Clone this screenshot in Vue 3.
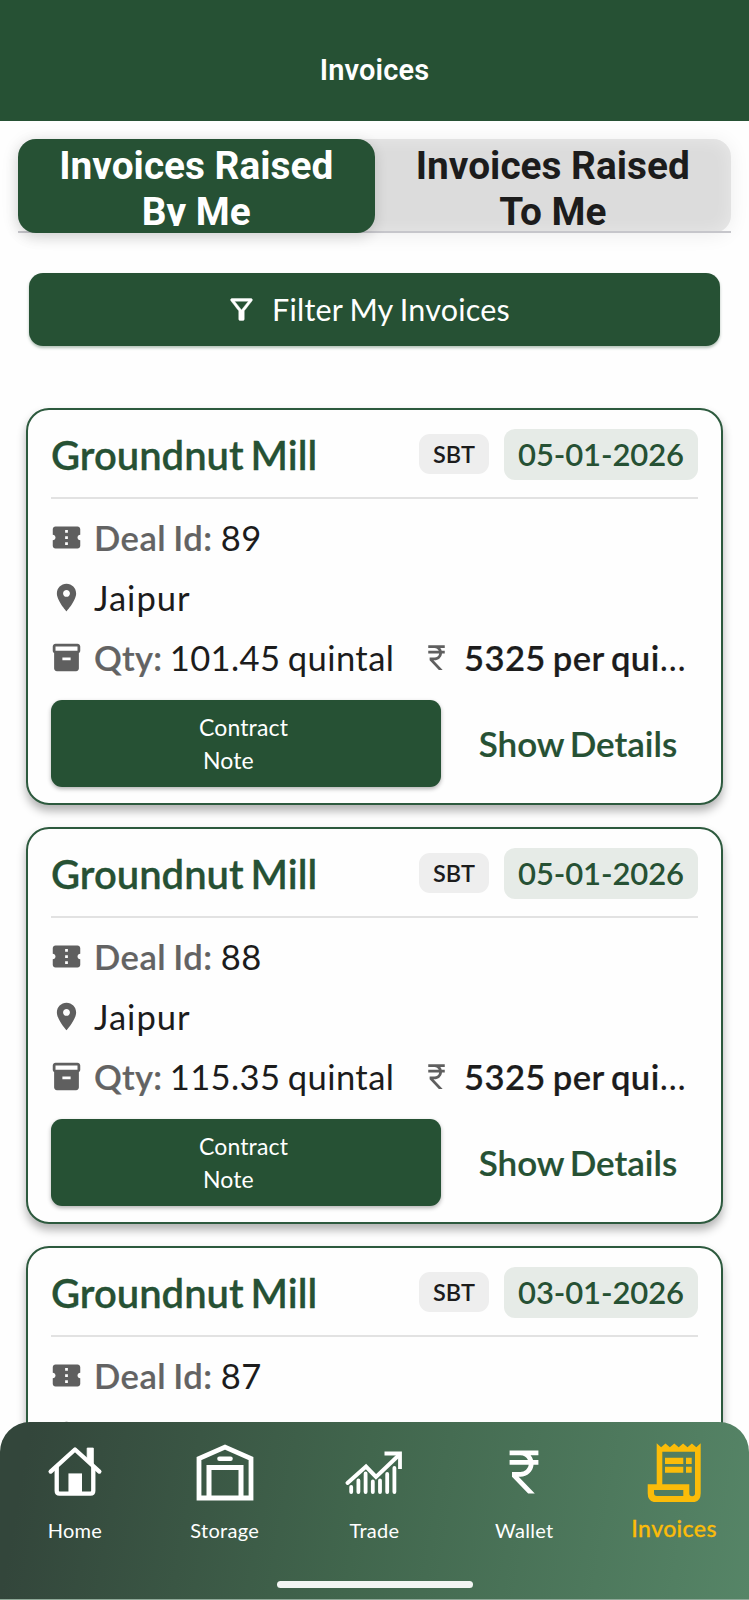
<template>
  <div class="screen">
    <header class="app-bar">
      <h1 class="app-title">Invoices</h1>
    </header>

    <main class="content">
      <div class="tabs">
        <button
          v-for="tab in tabs"
          :key="tab.id"
          class="tab"
          :class="{ active: tab.id === activeTab }"
          @click="activeTab = tab.id"
        >
          <span class="tab-label">{{ tab.label }}</span>
        </button>
      </div>

      <button class="filter-btn">
        <svg class="icon" viewBox="0 0 24 24">
          <path d="M7 6h10l-5.010 6.300L7 6zm-2.750-.39C6.270 8.200 10 13 10 13v6c0 .55.45 1 1 1h2c.55 0 1-.45 1-1v-6s3.720-4.800 5.740-7.390c.51-.66.04-1.610-.79-1.610H5.040c-.83 0-1.300.95-.79 1.610z" stroke="currentColor" stroke-width=".3" />
        </svg>
        <span class="filter-text">Filter My Invoices</span>
      </button>

      <section class="invoice-list">
        <article v-for="invoice in invoices" :key="invoice.dealId" class="card">
          <div class="card-header">
            <h2 class="mill">{{ invoice.name }}</h2>
            <span class="tag">{{ invoice.tag }}</span>
            <span class="date">{{ invoice.date }}</span>
          </div>

          <div class="row">
            <svg class="icon" viewBox="0 0 24 24">
              <path d="M22 10V6c0-1.11-.9-2-2-2H4c-1.1 0-1.99.89-1.99 2v4c1.1 0 1.99.9 1.99 2s-.89 2-2 2v4c0 1.1.9 2 2 2h16c1.1 0 2-.9 2-2v-4c-1.1 0-2-.9-2-2s.9-2 2-2zm-9 7.5h-2v-2h2v2zm0-4.5h-2v-2h2v2zm0-4.5h-2v-2h2v2z" />
            </svg>
            <span class="text"><b class="key deal">Deal Id:</b> {{ invoice.dealId }}</span>
          </div>

          <div class="row">
            <svg class="icon" viewBox="0 0 24 24">
              <path d="M12 2C8.13 2 5 5.13 5 9c0 5.25 7 13 7 13s7-7.75 7-13c0-3.87-3.13-7-7-7zm0 9.5c-1.38 0-2.5-1.12-2.5-2.5s1.12-2.5 2.5-2.5 2.5 1.12 2.5 2.5-1.12 2.5-2.5 2.5z" />
            </svg>
            <span class="text city">{{ invoice.city }}</span>
          </div>

          <div class="row">
            <svg class="icon" viewBox="0 0 24 24">
              <path d="M20 2H4c-1 0-2 .9-2 2v3.01c0 .72.43 1.34 1 1.69V20c0 1.1 1.1 2 2 2h14c.9 0 2-.9 2-2V8.7c.57-.35 1-.97 1-1.69V4c0-1.1-1-2-2-2zm-5 12H9v-2h6v2zm5-7H4V4l16-.02V7z" />
            </svg>
            <span class="text qty"><b class="key">Qty:</b> {{ invoice.qty }}</span>
            <svg class="icon rupee" viewBox="0 0 24 24">
              <path :d="rupeePath" />
            </svg>
            <span class="text price"><b>{{ invoice.price }}</b>…</span>
          </div>

          <div class="actions">
            <button class="contract-btn">
              <span class="contract-text">Contract<br /><span class="note">Note</span></span>
            </button>
            <button class="details-btn">Show Details</button>
          </div>
        </article>
      </section>
    </main>

    <nav class="bottom-nav">
      <div class="nav-items">
        <a class="nav-item">
          <svg class="nav-icon" viewBox="-2 -2.5 64 64" fill="none" stroke="currentColor">
            <path d="M4 29 30 5.5 56 29" stroke-width="4.6" stroke-linecap="round" stroke-linejoin="round" />
            <path d="M10.5 24v25.500q0 3 3 3h33q3 0 3-3V24" stroke-width="4.6" />
            <path d="M43 4h6.5v20L43 18z" fill="currentColor" stroke="currentColor" stroke-linejoin="round" />
            <path d="M23 31h14.5v21H23z" fill="currentColor" stroke="none" />
          </svg>
          <span class="nav-label">Home</span>
        </a>
        <a class="nav-item">
          <svg class="nav-icon" viewBox="0 0 60 60" fill="none" stroke="currentColor">
            <path d="M4 56V16.5L30 5l26 11.5V56z" stroke-width="4.8" />
            <path d="M14 56V25.5h32V56" stroke-width="5" />
            <path d="M24.5 16.8h11" stroke-width="4.6" stroke-linecap="round" />
          </svg>
          <span class="nav-label">Storage</span>
        </a>
        <a class="nav-item">
          <svg class="nav-icon" viewBox="0 0 60 60" fill="none" stroke="currentColor">
            <path d="M3.5 41 22 24.5 32 35 54.5 13.5" stroke-width="4" stroke-linecap="round" />
            <path d="M40.5 11.500h15.500V27" stroke-width="3.8" />
            <path d="M7.2 45v5M14.4 38.5v11.5M21.6 31.5v18.5M28.8 39.5v10.5M36 38.5v11.5M43.2 32v18M50.4 26v24" stroke-width="3.8" stroke-linecap="round" />
          </svg>
          <span class="nav-label">Trade</span>
        </a>
        <a class="nav-item">
          <svg class="nav-icon" viewBox="-.5 -.5 25 25" fill="currentColor">
            <path :d="rupeePath" />
          </svg>
          <span class="nav-label">Wallet</span>
        </a>
        <a class="nav-item active">
          <svg class="nav-icon" viewBox="0 0 60 60" fill="currentColor">
            <path
              fill-rule="evenodd"
              d="M12.7 1.3 17.1 5.3 21.5 1.5 25.9 5.3 30.3 1.5 34.7 5.3 39.1 1.5 43.5 5.3 47.9 1.5 52.3 5.3 56.7 1.3V51.3q0 9-9 9H12.7q-9 0-9-9V42.3h9zM18.3 9.7V42.3H45.3V51.5q0 2.8 2.8 2.8t2.9-2.8V9.7zM10 48V51q0 3 3 3H39.3V48z"
            />
            <path d="M21 15.7h18.3V22H21zM42 15.7h5.7V22H42zM21 24.7h18.3v6H21zM42 24.7h5.7v6H42z" />
          </svg>
          <span class="nav-label">Invoices</span>
        </a>
      </div>
      <div class="home-indicator"></div>
    </nav>
  </div>
</template>

<script setup>
import { ref } from 'vue';

const activeTab = ref('by-me');

const tabs = [
  { id: 'by-me', label: 'Invoices Raised By Me' },
  { id: 'to-me', label: 'Invoices Raised To Me' }
];

const invoices = [
  { name: 'Groundnut Mill', tag: 'SBT', date: '05-01-2026', dealId: 89, city: 'Jaipur', qty: '101.45 quintal', price: '5325 per qui' },
  { name: 'Groundnut Mill', tag: 'SBT', date: '05-01-2026', dealId: 88, city: 'Jaipur', qty: '115.35 quintal', price: '5325 per qui' },
  { name: 'Groundnut Mill', tag: 'SBT', date: '03-01-2026', dealId: 87, city: 'Jaipur', qty: '101.45 quintal', price: '5325 per qui' }
];

const rupeePath = 'M13.66 7C13.1 5.82 11.9 5 10.5 5H6V3h12v2h-3.26c.48.58.84 1.26 1.05 2H18v2h-2.02c-.25 2.8-2.61 5-5.48 5h-.73l6.73 7h-2.77L7 14v-2h3.5c1.76 0 3.22-1.3 3.46-3H6V7z';
</script>

<style>
body {
  margin: 0;
  background: #fff;
}
</style>

<style scoped>
.screen {
  width: 749px;
  height: 1600px;
  display: flex;
  flex-direction: column;
  overflow: hidden;
  background: #fefefe;
  color: #1c1c1c;
  font-family: Lato, 'Liberation Sans', sans-serif;
}

button {
  border: 0;
  padding: 0;
  background: none;
  font: inherit;
  color: inherit;
}

h1,
h2 {
  margin: 0;
}

.icon {
  width: 33px;
  height: 33px;
  flex: none;
  fill: currentColor;
}

/* top bar */
.app-bar {
  flex: none;
  height: 121px;
  box-sizing: border-box;
  padding-top: 52px;
  background: #265134;
  text-align: center;
}

.app-title {
  font: 600 29px/36px Roboto, sans-serif;
  letter-spacing: 0.15px;
  color: #fff;
}

.content {
  flex: 1;
  min-height: 0;
  overflow: hidden;
}

/* tabs */
.tabs {
  position: relative;
  display: flex;
  height: 94px;
  margin: 18px 18px 0;
  border-radius: 18px;
  background: #dcdcdc;
  box-shadow: inset 0 0 18px rgba(255, 255, 255, 0.4), 0 2px 20px rgba(0, 0, 0, 0.07);
}

/* hairline under both tabs, square at the ends */
.tabs::before {
  content: '';
  position: absolute;
  left: 0;
  right: 0;
  bottom: 0;
  height: 2px;
  background: #c6c6cb;
}

.tab {
  flex: 1;
  position: relative;
  height: 94px;
  padding: 4px 30px 0;
  border-radius: 18px;
  font: 700 38.8px/46px Roboto, sans-serif;
  display: flex;
  align-items: flex-start;
  justify-content: center;
}

.tab.active {
  background: #265134;
  color: #fff;
  box-shadow: 0 4px 14px rgba(0, 0, 0, 0.14);
}

.tab-label {
  height: 83px;
  overflow: hidden;
}

/* filter */
.filter-btn {
  display: flex;
  align-items: center;
  justify-content: center;
  gap: 14px;
  width: 691px;
  height: 73px;
  padding-right: 14px;
  box-sizing: border-box;
  margin: 40px 0 0 29px;
  border-radius: 14px;
  background: #265134;
  color: #fff;
  box-shadow: 0 2px 3px rgba(38, 81, 52, 0.35);
}

.filter-text {
  margin-top: -2px;
  font-size: 30.5px;
  letter-spacing: 0.2px;
  word-spacing: -1px;
}

/* invoice cards */
.invoice-list {
  display: flex;
  flex-direction: column;
  gap: 22px;
  padding: 62px 26px 0 26px;
}

.card {
  flex: none;
  height: 397px;
  box-sizing: border-box;
  padding: 19px 23px 0 23px;
  border: 2px solid #2d5a3e;
  border-radius: 23px;
  background: #fefefe;
  box-shadow: 0 6px 10px rgba(0, 0, 0, 0.3);
}

.card-header {
  display: flex;
  align-items: center;
  height: 52px;
  padding-bottom: 16px;
  margin-bottom: 9px;
  border-bottom: 2px solid #e2e2e2;
}

.mill {
  flex: 1;
  font-size: 40px;
  font-weight: 600;
  line-height: 52px;
  word-spacing: -3px;
  color: #265134;
  -webkit-text-stroke: 0.3px #265134;
}

.tag {
  width: 70px;
  height: 40px;
  margin: -3px 15px 0 0;
  border-radius: 11px;
  background: #eeeeee;
  font-size: 23.5px;
  font-weight: 600;
  line-height: 40px;
  text-align: center;
}

.date {
  width: 194px;
  height: 51px;
  margin-top: -1px;
  border-radius: 11px;
  background: #e6ebe7;
  color: #265134;
  font-size: 31px;
  font-weight: 600;
  line-height: 50px;
  letter-spacing: -0.1px;
  text-align: center;
}

.row {
  display: flex;
  align-items: center;
  height: 60px;
}

.row .icon {
  margin: -2px 11px 0 -1px;
  color: #5f5f5f;
}

.text {
  font-size: 34.6px;
  line-height: 44px;
  letter-spacing: 0.4px;
  word-spacing: -2px;
  white-space: nowrap;
}

.text b {
  font-weight: 600;
  -webkit-text-stroke: 0.2px currentColor;
}

.text .key {
  letter-spacing: 0.3px;
  color: #636363;
}

.text .deal {
  letter-spacing: 0.5px;
  margin-right: 1px;
}

.city {
  letter-spacing: 1px;
}

.qty {
  width: 327px;
}

.row .rupee {
  margin-right: 11px;
}

.actions {
  display: flex;
  align-items: center;
  margin-top: 12px;
}

.contract-btn {
  width: 390px;
  height: 87px;
  box-sizing: border-box;
  padding-right: 5px;
  border-radius: 11px;
  background: #265134;
  color: #fff;
  box-shadow: 0 2px 4px rgba(0, 0, 0, 0.3);
}

.contract-text {
  display: inline-block;
  font-size: 23px;
  line-height: 32.5px;
  letter-spacing: 0.15px;
  text-align: left;
}

.note {
  padding-left: 4px;
}

.details-btn {
  flex: 1;
  padding-left: 17px;
  margin-top: -1px;
  font-size: 35px;
  font-weight: 600;
  word-spacing: -3px;
  white-space: nowrap;
  color: #265134;
  -webkit-text-stroke: 0.2px #265134;
}

/* bottom navigation */
.bottom-nav {
  position: relative;
  z-index: 1;
  flex: none;
  height: 178px;
  box-sizing: border-box;
  margin-top: -178px;
  padding-top: 20px;
  border-radius: 30px 30px 0 0;
  border-bottom: 1px solid #8fa998;
  background: linear-gradient(100deg, #33463b 4%, #41664d 48%, #568567 100%);
  color: #fff;
}

.nav-items {
  display: flex;
}

.nav-item {
  flex: 1;
  display: flex;
  flex-direction: column;
  align-items: center;
}

.nav-icon {
  width: 60px;
  height: 60px;
}

.nav-label {
  margin-top: 14px;
  font-size: 20px;
  line-height: 28px;
  letter-spacing: 0.3px;
}

.nav-item.active {
  color: #fbbc09;
}

.nav-item.active .nav-label {
  margin-top: 12px;
  font-size: 23px;
  font-weight: 500;
  letter-spacing: 0.4px;
  -webkit-text-stroke: 0.3px currentColor;
}

.home-indicator {
  width: 196px;
  height: 7px;
  margin: 37px auto 0;
  border-radius: 4px;
  background: #f2f5f3;
}
</style>
